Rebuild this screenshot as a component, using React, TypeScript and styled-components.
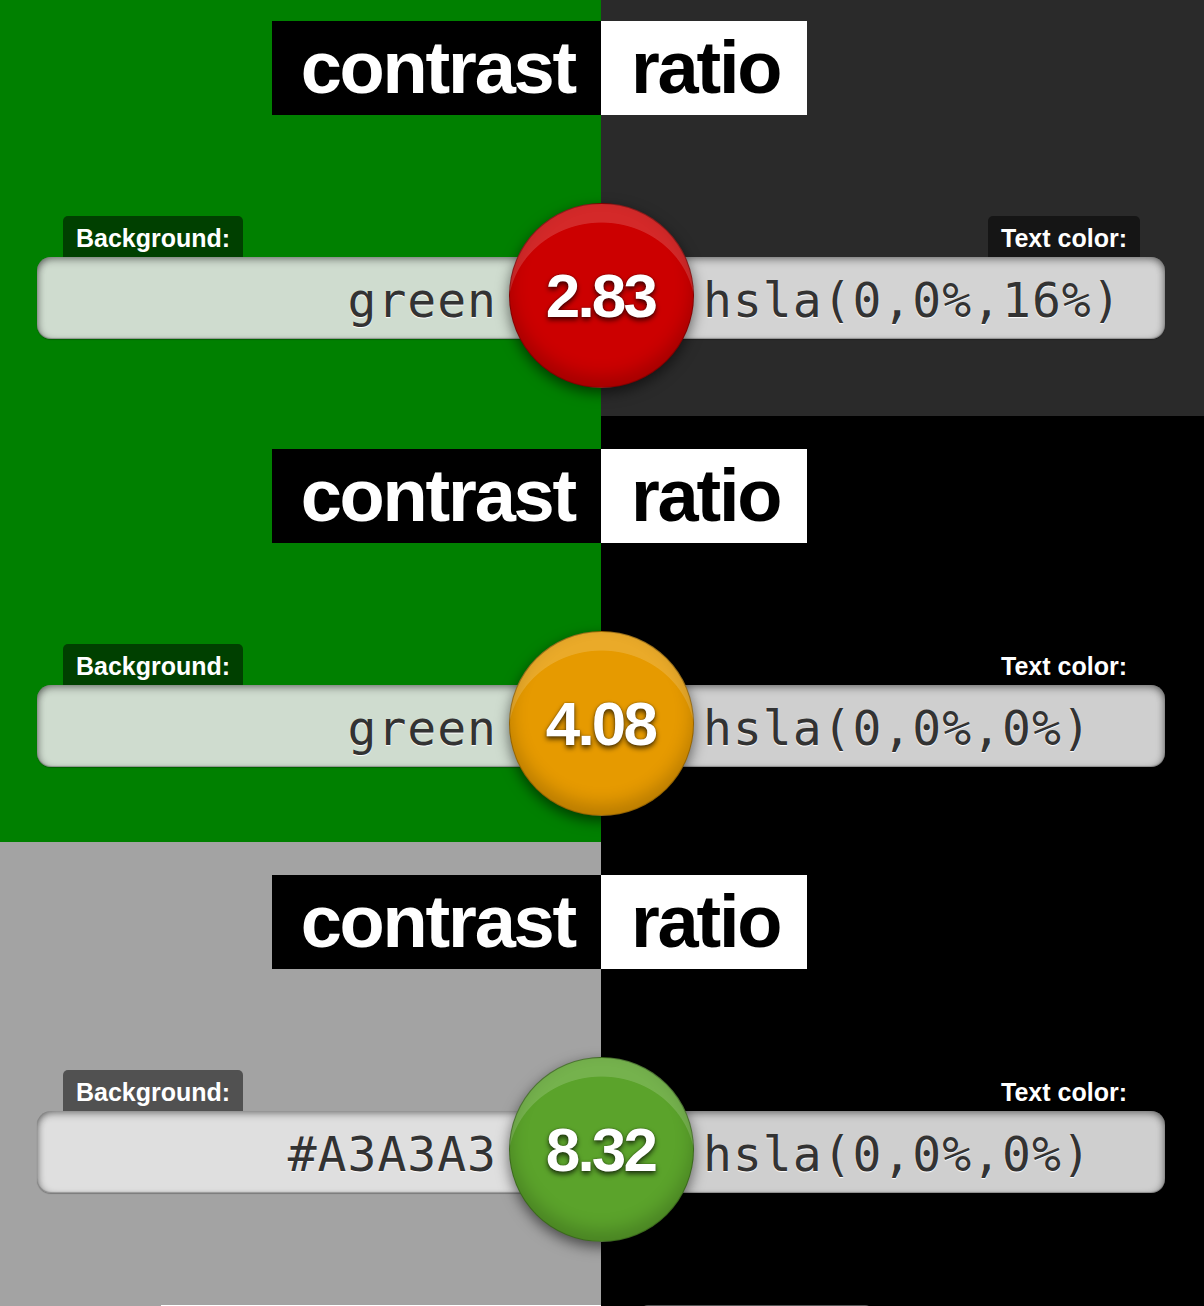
import React from "react";
import styled, { createGlobalStyle } from "styled-components";

const Global = createGlobalStyle`
  html, body {
    margin: 0;
    padding: 0;
    overflow: hidden;
    width: 1204px;
    height: 1306px;
  }
  body {
    font-family: "Liberation Sans", Arial, sans-serif;
  }
`;

const Page = styled.div`
  width: 1204px;
  height: 1306px;
  overflow: hidden;
  display: flex;
  flex-direction: column;
`;

const Section = styled.section<{ $bg: string; $fg: string; $first?: boolean; $h?: number }>`
  position: relative;
  box-sizing: border-box;
  height: ${(p) => (p.$h ? `${p.$h}px` : "auto")};
  flex: ${(p) => (p.$h ? "none" : "1 0 auto")};
  padding-top: ${(p) => (p.$first ? 21 : 33)}px;
  background: linear-gradient(
    to right,
    ${(p) => p.$bg} 0 calc(50% - 1px),
    ${(p) => p.$fg} calc(50% - 1px) 100%
  );
  display: flex;
  flex-direction: column;
`;

const Title = styled.h1`
  margin: 0;
  display: grid;
  grid-template-columns: 601px 1fr;
  font: bold 74px/94px "Liberation Sans", Arial, sans-serif;
  letter-spacing: -2.2px;
`;

const Word = styled.span<{ $light?: boolean }>`
  justify-self: ${(p) => (p.$light ? "start" : "end")};
  background: ${(p) => (p.$light ? "#fff" : "#000")};
  color: ${(p) => (p.$light ? "#000" : "#fff")};
  padding: ${(p) => (p.$light ? "0 27px 0 30px" : "0 26px 0 29px")};
  height: 94px;
`;

const Controls = styled.div`
  position: relative;
  margin-top: 101px;
  display: grid;
  grid-template-columns: 1fr 1fr;
  padding: 0 39px 0 37px;
`;

const Field = styled.div<{ $right?: boolean }>`
  display: flex;
  flex-direction: column;
  align-items: ${(p) => (p.$right ? "flex-end" : "flex-start")};
`;

const Label = styled.label<{ $right?: boolean }>`
  box-sizing: border-box;
  height: 41px;
  padding: 3px 13px 0;
  margin: ${(p) => (p.$right ? "0 25px 0 0" : "0 0 0 26px")};
  background: rgba(0, 0, 0, 0.5);
  color: #fff;
  border-radius: 5px 5px 0 0;
  font: bold 25px/38px "Liberation Sans", Arial, sans-serif;
`;

const Input = styled.input<{ $right?: boolean }>`
  box-sizing: border-box;
  width: 100%;
  height: 82px;
  margin: 0;
  border: 0;
  outline: none;
  background: hsla(0, 0%, 90%, 0.9);
  color: #333;
  font: 48px/1.2 "DejaVu Sans Mono", monospace;
  letter-spacing: 1px;
  text-shadow: 0 1px 1px #fff;
  text-align: ${(p) => (p.$right ? "left" : "right")};
  padding: ${(p) => (p.$right ? "4px 10px 0 102px" : "4px 104px 0 10px")};
  border-radius: ${(p) => (p.$right ? "0 14px 14px 0" : "14px 0 0 14px")};
  box-shadow:
    inset 0 4px 8px -2px rgba(0, 0, 0, 0.45),
    inset ${(p) => (p.$right ? "-4px" : "4px")} 0 8px -4px rgba(0, 0, 0, 0.4),
    inset 0 -1px 1px rgba(0, 0, 0, 0.25),
    0 1px 1px rgba(0, 0, 0, 0.25);
`;

const Badge = styled.output<{ $color: string }>`
  position: absolute;
  top: -13px;
  left: calc(50% - 93px);
  box-sizing: border-box;
  width: 185px;
  height: 185px;
  border-radius: 50%;
  border: 1px solid rgba(0, 0, 0, 0.35);
  display: flex;
  align-items: center;
  justify-content: center;
  background:
    radial-gradient(ellipse 94px 88px at 50% 58%, transparent 99%, rgba(255, 255, 255, 0.16) 100%),
    ${(p) => p.$color};
  box-shadow:
    inset 0 -10px 18px rgba(0, 0, 0, 0.2),
    0 5px 14px rgba(0, 0, 0, 0.55);
  color: #fff;
  font: bold 62px/1 "Liberation Sans", Arial, sans-serif;
  letter-spacing: -2.8px;
  padding-right: 2px;
  text-shadow: 0 3px 5px rgba(0, 0, 0, 0.65), 0 0 2px rgba(0, 0, 0, 0.4);
`;

const Peek = styled.div`
  display: grid;
  grid-template-columns: 601px 1fr;
  margin-top: 4px;
`;

const PeekLeft = styled.div`
  justify-self: end;
  width: 440px;
  height: 20px;
  background: #fff;
`;

const PeekRight = styled.div`
  justify-self: start;
  margin-left: 39px;
  width: 233px;
  height: 20px;
  box-sizing: border-box;
  background: #eee;
  border: 2px solid #555;
  border-radius: 8px 8px 0 0;
`;

type Row = {
  bg: string;
  fg: string;
  bgText: string;
  fgText: string;
  ratio: string;
  color: string;
  h?: number;
};

const rows: Row[] = [
  { bg: "#008000", fg: "#2a2a2a", bgText: "green", fgText: "hsla(0,0%,16%)", ratio: "2.83", color: "#cc0000", h: 416 },
  { bg: "#008000", fg: "#000000", bgText: "green", fgText: "hsla(0,0%,0%)", ratio: "4.08", color: "#e69a00", h: 426 },
  { bg: "#a3a3a3", fg: "#000000", bgText: "#A3A3A3", fgText: "hsla(0,0%,0%)", ratio: "8.32", color: "#5ba32b", h: 426 },
];

export default function App() {
  return (
    <Page>
      <Global />
      {rows.map((r, i) => (
        <Section key={i} $bg={r.bg} $fg={r.fg} $first={i === 0} $h={r.h}>
          <Title>
            <Word>contrast</Word>
            <Word $light>ratio</Word>
          </Title>
          <Controls>
            <Field>
              <Label>Background:</Label>
              <Input readOnly value={r.bgText} />
            </Field>
            <Field $right>
              <Label $right>Text color:</Label>
              <Input $right readOnly value={r.fgText} />
            </Field>
            <Badge $color={r.color}>{r.ratio}</Badge>
          </Controls>
        </Section>
      ))}
      <Section $bg="#a3a3a3" $fg="#000000">
        <Peek>
          <PeekLeft />
          <PeekRight />
        </Peek>
      </Section>
    </Page>
  );
}
